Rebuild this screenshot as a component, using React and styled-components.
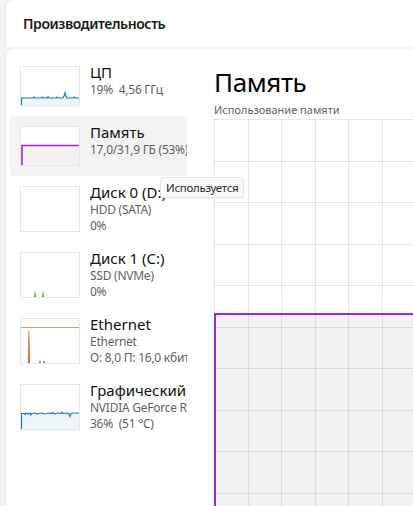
import React from "react";
import styled, { createGlobalStyle } from "styled-components";

const Global = createGlobalStyle`
  html, body, #root { height: 100%; }
  body {
    margin: 0;
    background: #f3f3f3;
    font-family: "Noto Sans", "Open Sans", sans-serif;
    color: #1a1a1a;
    overflow: hidden;
  }
`;

const Shell = styled.div`
  height: 100%;
  display: flex;
  flex-direction: column;
  gap: 2px;
  padding-left: 5px;
`;

const Header = styled.header`
  flex: 0 0 47px;
  background: #fff;
  border-left: 1px solid #e5e5e5;
  border-top-left-radius: 8px;
  display: flex;
  align-items: center;
  padding-left: 17px;
  font-size: 14px;
  font-weight: 600;
  letter-spacing: -0.4px;
`;

const Content = styled.main`
  position: relative;
  flex: 1;
  min-height: 0;
  background: #fff;
  border-left: 1px solid #e5e5e5;
  border-top-left-radius: 8px;
  display: flex;
  overflow: hidden;
`;

const Sidebar = styled.nav`
  flex: 0 0 208px;
  padding: 7px 0 0 4px;
  box-sizing: border-box;
  display: flex;
  flex-direction: column;
`;

const Item = styled.div`
  width: 177px;
  height: ${(p) => p.$h + 20}px;
  box-sizing: border-box;
  padding: 7px 0 0 10px;
  display: flex;
  align-items: flex-start;
  gap: 10px;
  border-radius: 4px;
  background: ${(p) => (p.$selected ? "#f3f3f3" : "transparent")};
`;

const Thumb = styled.div`
  flex: 0 0 60px;
  margin-top: 3px;
  height: ${(p) => p.$h}px;
  box-sizing: border-box;
  border: 1px solid #e6e6e6;
  background: #fff;
  display: flex;
  svg { display: block; }
`;

const ItemText = styled.div`
  flex: 1;
  min-width: 0;
  overflow: hidden;
  white-space: pre;
  display: flex;
  flex-direction: column;
`;

const ItemTitle = styled.div`
  font-size: 15px;
  line-height: 19px;
  color: #111;
`;

const ItemSub = styled.div`
  font-size: 12px;
  line-height: 16px;
  letter-spacing: -0.25px;
  color: #5f5f5f;
`;

const Main = styled.section`
  flex: 1;
  min-width: 0;
  display: flex;
  flex-direction: column;
  padding-top: 15px;
`;

const Title = styled.h1`
  margin: 0;
  font-size: 26px;
  font-weight: 400;
  letter-spacing: -0.4px;
  line-height: 36px;
  color: #000;
`;

const Caption = styled.div`
  font-size: 11px;
  line-height: 16px;
  color: #5f5f5f;
  margin-top: 2px;
  margin-bottom: 1px;
`;

const ChartBox = styled.div`
  flex: 0 0 auto;
  svg { display: block; }
`;

const Tooltip = styled.div`
  position: absolute;
  left: 154px;
  top: 128px;
  height: 19px;
  padding: 0 5px;
  display: flex;
  align-items: center;
  background: #f9f9f9;
  border: 1px solid #e3e3e3;
  border-radius: 4px;
  font-size: 11.5px;
  letter-spacing: -0.3px;
  color: #2b2b2b;
  box-shadow: 0 1px 2px rgba(0, 0, 0, 0.06);
`;

const BLUE = "#1a7fbd";
const PURPLE = "#9b2dc4";

const cpuLine =
  "M0.5 38 L0.5 31 L12 31 L13 30 L14 31 L20 31 L21 30 L22 31 L26 31 L27 29.5 L28 31 L35 31 L36 30 L37 31 L42 31 L43 29 L44 26 L45 29 L46 31 L52 31 L53 30 L54 31 L58 31";

const CpuGraph = () => (
  <svg width="58" height="38" viewBox="0 0 58 38">
    <path d={cpuLine + " L58 38 Z"} fill="#eef4f9" />
    <path d={cpuLine} fill="none" stroke={BLUE} strokeWidth="1.2" />
  </svg>
);

const MemGraph = () => (
  <svg width="58" height="38" viewBox="0 0 58 38">
    <rect x="0" y="18" width="58" height="20" fill="#f3f1f4" />
    <path d="M1 38 L1 18.5 L58 18.5" fill="none" stroke={PURPLE} strokeWidth="1.6" />
  </svg>
);

const Disk1Graph = () => (
  <svg width="58" height="44" viewBox="0 0 58 44">
    <path d="M13 44 L14 37 L15 44 Z" fill="#5aa832" />
    <path d="M21 44 L22 37 L23 44 Z" fill="#5aa832" />
  </svg>
);

const EthGraph = () => (
  <svg width="58" height="44" viewBox="0 0 58 44">
    <line x1="0" y1="8.5" x2="58" y2="8.5" stroke="#d7996a" strokeWidth="1.2" />
    <path d="M7 44 L7.5 12 L8.2 11 L9 44 Z" fill="#c0570f" />
    <path d="M6.6 44 L7.2 20 L7.6 44 Z" fill="#e0a070" />
    <path d="M18 44 L18.5 41.5 L19.5 41.5 L20 44 Z" fill="#c97a44" />
    <path d="M22 44 L22.5 41.5 L23.5 41.5 L24 44 Z" fill="#c97a44" />
  </svg>
);

const gpuLine =
  "M0.5 44 L0.5 28.5 L3 28.5 L4 29.5 L5 28 L7 29 L9 28 L10 30 L11 28.5 L14 28 L16 29 L18 28.5 L21 28 L23 29 L26 28.5 L28 28 L30 28.5 L32 27.5 L33 29 L35 28.5 L38 28 L40 28.5 L41 27 L42 28.5 L44 28 L46 28.5 L47 28 L48 29 L49 31.5 L50 28.5 L52 28 L58 28";

const GpuGraph = () => (
  <svg width="58" height="44" viewBox="0 0 58 44">
    <path d={gpuLine + " L58 44 Z"} fill="#eef4f9" />
    <path d={gpuLine} fill="none" stroke={BLUE} strokeWidth="1.2" />
  </svg>
);

const items = [
  { title: "ЦП", lines: ["19%  4,56 ГГц"], h: 40, graph: <CpuGraph /> },
  { title: "Память", lines: ["17,0/31,9 ГБ (53%)"], h: 40, graph: <MemGraph />, selected: true },
  { title: "Диск 0 (D:)", lines: ["HDD (SATA)", "0%"], h: 46, graph: null },
  { title: "Диск 1 (C:)", lines: ["SSD (NVMe)", "0%"], h: 46, graph: <Disk1Graph /> },
  { title: "Ethernet", lines: ["Ethernet", "О: 8,0 П: 16,0 кбит/с"], h: 46, graph: <EthGraph /> },
  { title: "Графический процессор 0", lines: ["NVIDIA GeForce RTX 3070", "36%  (51 °C)"], h: 46, graph: <GpuGraph /> },
];

const GW = 340;
const GH = 420;
const CW = 33.6;
const CH = 41.5;
const FILL_Y = 195;

const MemoryChart = () => {
  const v = [];
  for (let i = 0; i * CW <= GW; i++) v.push(Math.round(i * CW) + 0.5);
  const h = [];
  for (let j = 0; j * CH <= GH; j++) h.push(Math.round(j * CH) + 0.5);
  return (
    <ChartBox>
      <svg width={GW} height={GH} viewBox={`0 0 ${GW} ${GH}`}>
        <rect x="0" y={FILL_Y} width={GW} height={GH - FILL_Y} fill="#f3f1f4" />
        {v.map((x) => (
          <line key={"v" + x} x1={x} y1="0" x2={x} y2={GH} stroke="rgba(0,0,0,0.09)" strokeWidth="1.2" />
        ))}
        {h.map((y) => (
          <line key={"h" + y} x1="0" y1={y} x2={GW} y2={y} stroke="rgba(0,0,0,0.09)" strokeWidth="1.2" />
        ))}
        <path d={`M1 ${GH} L1 ${FILL_Y} L${GW} ${FILL_Y}`} fill="none" stroke={PURPLE} strokeWidth="2" />
      </svg>
    </ChartBox>
  );
};

export default function App() {
  return (
    <>
      <Global />
      <Shell>
        <Header>Производительность</Header>
        <Content>
          <Sidebar>
            {items.map((it) => (
              <Item key={it.title} $h={it.h} $selected={it.selected}>
                <Thumb $h={it.h}>{it.graph}</Thumb>
                <ItemText>
                  <ItemTitle>{it.title}</ItemTitle>
                  {it.lines.map((l) => (
                    <ItemSub key={l}>{l}</ItemSub>
                  ))}
                </ItemText>
              </Item>
            ))}
          </Sidebar>
          <Main>
            <Title>Память</Title>
            <Caption>Использование памяти</Caption>
            <MemoryChart />
          </Main>
          <Tooltip>Используется</Tooltip>
        </Content>
      </Shell>
    </>
  );
}
